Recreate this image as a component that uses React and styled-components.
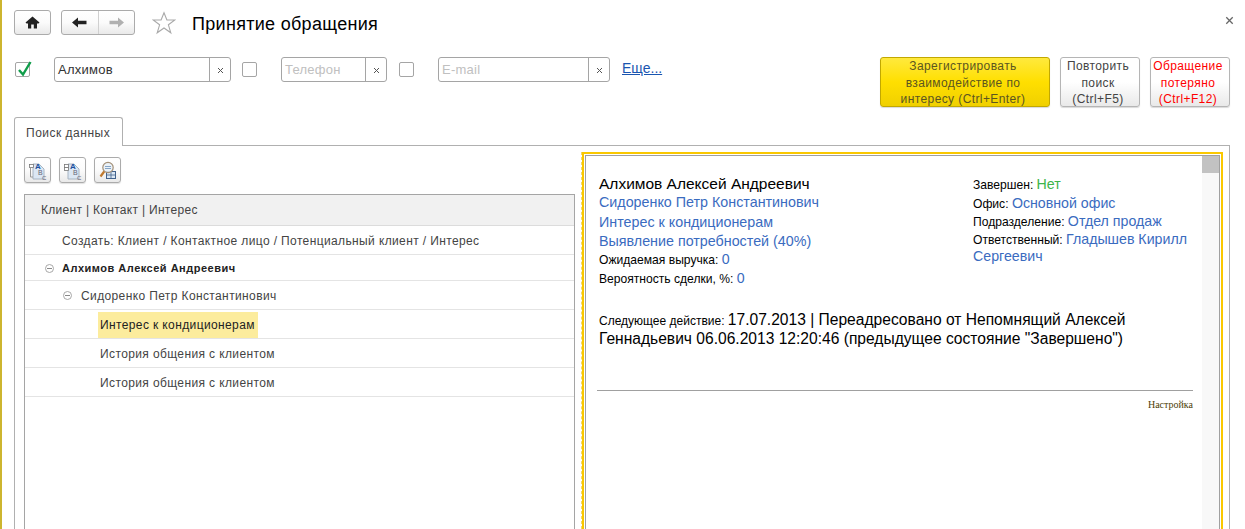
import React from 'react';
import styled, { createGlobalStyle, css } from 'styled-components';

const GlobalStyle = createGlobalStyle`
  html, body {
    margin: 0;
    padding: 0;
    background: #fff;
  }
  * { box-sizing: border-box; }
`;

const Page = styled.div`
  width: 1245px;
  height: 529px;
  overflow: hidden;
  background: #fff;
  border-left: 2px solid #cdb52f;
  padding: 10px 15px 0 12px;
  font-family: "Liberation Sans", Arial, sans-serif;
  font-size: 12px;
  color: #333;
  display: flex;
  flex-direction: column;
`;

// --- top bar
const TopBar = styled.div`
  display: flex;
  align-items: center;
  height: 25px;
`;

const buttonFace = css`
  background: linear-gradient(#fff, #fbfbfb 50%, #e9e9e9);
  border: 1px solid #ababab;
  border-radius: 3px;
`;

const HomeButton = styled.div`
  ${buttonFace}
  width: 37px;
  height: 25px;
  display: flex;
  align-items: center;
  justify-content: center;
`;

const NavGroup = styled.div`
  ${buttonFace}
  width: 74px;
  height: 25px;
  margin-left: 10px;
  display: flex;
`;

const NavCell = styled.div`
  flex: 1;
  display: flex;
  align-items: center;
  justify-content: center;
  & + & { border-left: 1px solid #d0d0d0; }
`;

const StarWrap = styled.div`
  margin-left: 17px;
  width: 24px;
  height: 24px;
`;

const Title = styled.div`
  margin-left: 16px;
  padding-top: 3px;
  font-size: 18px;
  color: #000;
  letter-spacing: 0.3px;
`;

const CloseMark = styled.div`
  margin-left: auto;
  margin-right: -4px;
  width: 9px;
  height: 9px;
  margin-top: -8px;
`;

// --- search row
const SearchRow = styled.div`
  display: flex;
  align-items: flex-start;
  margin-top: 22px;
  height: 50px;
`;

const Check = styled.div`
  width: 15px;
  height: 15px;
  margin-top: 5px;
  margin-left: ${p => p.$left || 0}px;
  border: 1px solid #a5a5a5;
  border-radius: 2px;
  background: #fff;
  position: relative;
`;

const CheckMark = styled.svg`
  position: absolute;
  left: 0;
  top: -4px;
`;

const Field = styled.div`
  width: ${p => p.$width}px;
  height: 25px;
  margin-left: ${p => p.$left}px;
  border: 1px solid #a5a5a5;
  border-radius: 3px;
  display: flex;
  background: #fff;
`;

const FieldText = styled.div`
  flex: 1;
  padding-left: 3px;
  line-height: 23px;
  font-size: 13px;
  letter-spacing: 0.25px;
  color: ${p => (p.$placeholder ? '#c0c0c0' : '#333')};
`;

const FieldClear = styled.div`
  width: 21px;
  border-left: 1px solid #a5a5a5;
  display: flex;
  align-items: center;
  justify-content: center;
  padding-top: 1px;
`;

const MoreLink = styled.a`
  margin-left: 12px;
  line-height: 23px;
  font-size: 14px;
  color: #1a55b0;
  text-decoration: underline;
`;

const Actions = styled.div`
  margin-left: auto;
  display: flex;
  gap: 10px;
`;

const ActionButton = styled.div`
  width: ${p => p.$width}px;
  height: 50px;
  border-radius: 3px;
  text-align: center;
  font-size: 12px;
  line-height: 16.5px;
  letter-spacing: 0.4px;
  padding-right: 4px;
  box-shadow: 0 1px 1px rgba(0, 0, 0, 0.15);
  ${p => p.$primary
    ? css`
        background: linear-gradient(#ffe93d, #ffdf00 50%, #f0d000);
        border: 1px solid #c2a800;
        color: #5b5520;
      `
    : css`
        background: linear-gradient(#fff, #fff 50%, #e9e9e9);
        border: 1px solid #b5b5b5;
        color: ${p.$alert ? '#f00' : '#444'};
      `}
`;

// --- tab
const TabStrip = styled.div`
  display: flex;
  height: 29px;
  margin-top: 10px;
`;

const Tab = styled.div`
  width: 109px;
  border: 1px solid #b0b0b0;
  border-bottom: none;
  border-radius: 3px 3px 0 0;
  padding: 8px 0 0 11px;
  letter-spacing: 0.5px;
  color: #444;
`;

const TabFiller = styled.div`
  flex: 1;
  border-bottom: 1px solid #b0b0b0;
`;

const Panel = styled.div`
  flex: 1;
  min-height: 0;
  display: flex;
  border-left: 1px solid #b0b0b0;
  border-right: 1px solid #b0b0b0;
  padding: 0 6px 0 9px;
  gap: 6px;
`;

// --- left column
const TreeColumn = styled.div`
  width: 551px;
  flex-shrink: 0;
  padding-top: 11px;
  display: flex;
  flex-direction: column;
`;

const Tools = styled.div`
  display: flex;
  gap: 8px;
  height: 26px;
  margin-bottom: 11px;
`;

const ToolButton = styled.div`
  ${buttonFace}
  width: 27px;
  height: 26px;
  display: flex;
  align-items: center;
  justify-content: center;
  box-shadow: 0 1px 1px rgba(0, 0, 0, 0.12);
`;

const Tree = styled.div`
  flex: 1;
  border: 1px solid #a5a5a5;
  border-bottom: none;
`;

const TreeHeader = styled.div`
  height: 31px;
  background: #f1f1f1;
  border-bottom: 1px solid #dcdcdc;
  padding-left: 16px;
  line-height: 31px;
  letter-spacing: 0.3px;
  color: #444;
`;

const TreeRow = styled.div`
  height: ${p => p.$height || 29}px;
  border-bottom: 1px solid #e4e4e4;
  display: flex;
  align-items: center;
  padding: 1px 0 0 ${p => p.$indent}px;
  letter-spacing: ${p => (p.$bold ? 0.5 : 0.38)}px;
  font-weight: ${p => (p.$bold ? 700 : 400)};
  font-size: ${p => (p.$bold ? 11 : 12)}px;
  color: ${p => (p.$bold ? '#222' : '#444')};
`;

const Toggle = styled.span`
  width: 9px;
  height: 9px;
  margin-right: ${p => p.$gap}px;
  border: 1px solid #a8a8a8;
  border-radius: 50%;
  display: flex;
  align-items: center;
  justify-content: center;
  &::after {
    content: '';
    width: 5px;
    height: 1px;
    background: #888;
  }
`;

const Highlight = styled.span`
  background: #fcec9d;
  color: #222;
  height: 26px;
  line-height: 26px;
  padding: 0 3px 0 2px;
  margin-left: -2px;
`;

// --- right column
const DetailFrame = styled.div`
  flex: 1;
  min-width: 0;
  margin-top: 6px;
  border-left: 1px dashed #f2d968;
  display: flex;
`;

const DetailYellow = styled.div`
  flex: 1;
  min-width: 0;
  border: 2px solid #fac800;
  border-bottom: none;
  padding: 1px 1px 0;
  display: flex;
`;

const DetailBox = styled.div`
  flex: 1;
  min-width: 0;
  display: flex;
  border: 1px solid #a0a0a0;
  border-bottom: none;
`;

const DetailBody = styled.div`
  flex: 1;
  min-width: 0;
  padding: 18px 10px 0 13px;
  color: #000;
`;

const DetailColumns = styled.div`
  display: flex;
  height: 137.5px;
`;

const DetailMain = styled.div`
  width: 374px;
`;

const DetailSide = styled.div`
  flex: 1;
  padding-top: 1.5px;
`;

const Line = styled.div`
  font-size: ${p => p.$size || 12.1}px;
  line-height: ${p => p.$line || 19.3}px;
  color: ${p => p.$color || '#000'};
`;

const Value = styled.span`
  font-size: 14.2px;
  line-height: 1;
  color: ${p => p.$color || '#3a6bc0'};
`;

const NextAction = styled.div`
  font-size: 12px;
  line-height: 19px;
  width: 560px;
`;

const NextText = styled.span`
  font-size: 15.6px;
  line-height: 1;
`;

const Rule = styled.div`
  height: 1px;
  background: #a0a0a0;
  margin: 40px 0 0 -2px;
  width: 596px;
`;

const Settings = styled.div`
  width: 594px;
  margin-top: 8px;
  text-align: right;
  font-family: "Liberation Serif", "Times New Roman", serif;
  font-size: 10px;
  color: #4c3e05;
`;

const Scrollbar = styled.div`
  width: 17px;
  flex-shrink: 0;
  background: #f8f8f8;
`;

const ScrollThumb = styled.div`
  height: 17px;
  background: #c2c2c2;
`;

const ClearIcon = ({ size = 7, color = '#555' }) => (
  <svg width={size} height={size} viewBox="0 0 7 7">
    <path d="M1 1l5 5M6 1L1 6" stroke={color} strokeWidth="1" fill="none" />
  </svg>
);

const HomeIcon = () => (
  <svg width="15" height="13" viewBox="0 0 15 13">
    <path d="M7.5 0.5L0.5 6.5L1.5 7.5H3V12.5H6.2V8.5H8.8V12.5H12V7.5H13.5L14.5 6.5Z" fill="#222" />
  </svg>
);

const ArrowIcon = ({ left, color }) => (
  <svg width="15" height="11" viewBox="0 0 15 11">
    <path
      d={left ? 'M0 5.5L6 0.5V3.8H14.5V7.2H6V10.5Z' : 'M15 5.5L9 0.5V3.8H0.5V7.2H9V10.5Z'}
      fill={color}
    />
  </svg>
);

const StarIcon = () => (
  <svg width="24" height="24" viewBox="0 0 24 24">
    <path
      d="M12 1.8L14.9 9H22.8L16.4 13.8L18.8 21.8L12 17L5.2 21.8L7.6 13.8L1.2 9H9.1Z"
      fill="#fff"
      stroke="#a9a9a9"
      strokeWidth="1.1"
    />
  </svg>
);

const PageLetters = ({ tree }) => (
  <svg width="20" height="21" viewBox="0 0 20 21">
    <path d="M5 4H11L16 9V19H5Z" fill="#dbe7f4" stroke="#a7b4c2" strokeWidth="1" />
    <rect x="1.5" y="4.5" width="4" height="3" fill="#fff" stroke="#777" strokeWidth="0.8" />
    {tree ? (
      <rect x="1.5" y="7.5" width="4" height="3" fill="#fff" stroke="#777" strokeWidth="0.8" />
    ) : (
      <path d="M2.5 8V17H5" fill="none" stroke="#999" strokeWidth="1" />
    )}
    <text x="7" y="9" fontSize="8" fontWeight="700" fill="#1c4f9c" fontFamily="Liberation Sans">A</text>
    <text x="10" y="15" fontSize="7" fill="#667" fontFamily="Liberation Sans">B</text>
    <text x="14" y="20" fontSize="6" fill="#667" fontFamily="Liberation Sans">C</text>
  </svg>
);

const SearchTableIcon = () => (
  <svg width="20" height="20" viewBox="0 0 20 20">
    <rect x="8.5" y="11.5" width="9" height="7" fill="#dbe7f4" stroke="#42628c" strokeWidth="1" />
    <path d="M13 12V18M9 15H17" stroke="#42628c" strokeWidth="0.8" />
    <circle cx="10" cy="7.5" r="5.2" fill="#e8f0f7" fillOpacity="0.85" stroke="#a39078" strokeWidth="1.2" />
    <path d="M6.2 11.5L2.5 16.5" stroke="#c07a30" strokeWidth="2.2" />
    <path d="M7 6.5H13M7 8.5H13" stroke="#7a9cc0" strokeWidth="0.9" />
  </svg>
);

const treeRows = [
  { id: 'create', indent: 37, label: 'Создать: Клиент / Контактное лицо / Потенциальный клиент / Интерес' },
  { id: 'client', indent: 20, height: 26, bold: true, toggle: 8, label: 'Алхимов Алексей Андреевич' },
  { id: 'contact', indent: 38, toggle: 9, label: 'Сидоренко Петр Константинович' },
  { id: 'interest', indent: 75, selected: true, label: 'Интерес к кондиционерам' },
  { id: 'history1', indent: 75, label: 'История общения с клиентом' },
  { id: 'history2', indent: 75, label: 'История общения с клиентом' },
];

export default function App() {
  return (
    <>
      <GlobalStyle />
      <Page>
        <TopBar>
          <HomeButton><HomeIcon /></HomeButton>
          <NavGroup>
            <NavCell><ArrowIcon left color="#222" /></NavCell>
            <NavCell><ArrowIcon color="#b0b0b0" /></NavCell>
          </NavGroup>
          <StarWrap><StarIcon /></StarWrap>
          <Title>Принятие обращения</Title>
          <CloseMark><ClearIcon size={9} color="#666" /></CloseMark>
        </TopBar>

        <SearchRow>
          <Check $left={1}>
            <CheckMark width="18" height="19" viewBox="0 0 18 19">
              <path d="M3 11L7 15.5L14.5 3" fill="none" stroke="#0f9d4a" strokeWidth="2.4" />
            </CheckMark>
          </Check>
          <Field $width={177} $left={24}>
            <FieldText>Алхимов</FieldText>
            <FieldClear><ClearIcon /></FieldClear>
          </Field>
          <Check $left={11} />
          <Field $width={106} $left={24}>
            <FieldText $placeholder>Телефон</FieldText>
            <FieldClear><ClearIcon /></FieldClear>
          </Field>
          <Check $left={12} />
          <Field $width={172} $left={24}>
            <FieldText $placeholder>E-mail</FieldText>
            <FieldClear><ClearIcon /></FieldClear>
          </Field>
          <MoreLink>Еще...</MoreLink>
          <Actions>
            <ActionButton $primary $width={170}>Зарегистрировать<br />взаимодействие по<br />интересу (Ctrl+Enter)</ActionButton>
            <ActionButton $width={80}>Повторить<br />поиск<br />(Ctrl+F5)</ActionButton>
            <ActionButton $alert $width={80}>Обращение<br />потеряно<br />(Ctrl+F12)</ActionButton>
          </Actions>
        </SearchRow>

        <TabStrip>
          <Tab>Поиск данных</Tab>
          <TabFiller />
        </TabStrip>

        <Panel>
          <TreeColumn>
            <Tools>
              <ToolButton><PageLetters /></ToolButton>
              <ToolButton><PageLetters tree /></ToolButton>
              <ToolButton><SearchTableIcon /></ToolButton>
            </Tools>
            <Tree>
              <TreeHeader>Клиент | Контакт | Интерес</TreeHeader>
              {treeRows.map(row => (
                <TreeRow key={row.id} $indent={row.indent} $height={row.height} $bold={row.bold}>
                  {row.toggle && <Toggle $gap={row.toggle} />}
                  {row.selected ? <Highlight>{row.label}</Highlight> : row.label}
                </TreeRow>
              ))}
            </Tree>
          </TreeColumn>

          <DetailFrame>
            <DetailYellow>
              <DetailBox>
                <DetailBody>
                  <DetailColumns>
                    <DetailMain>
                      <Line $size={15.5}>Алхимов Алексей Андреевич</Line>
                      <Line $size={14.3} $color="#3a6bc0">Сидоренко Петр Константинович</Line>
                      <Line $size={14.3} $color="#3a6bc0">Интерес к кондиционерам</Line>
                      <Line $size={14.3} $color="#3a6bc0">Выявление потребностей (40%)</Line>
                      <Line>Ожидаемая выручка: <Value>0</Value></Line>
                      <Line>Вероятность сделки, %: <Value>0</Value></Line>
                    </DetailMain>
                    <DetailSide>
                      <Line>Завершен: <Value $color="#3db54a">Нет</Value></Line>
                      <Line>Офис: <Value>Основной офис</Value></Line>
                      <Line $line={17.5}>Подразделение: <Value>Отдел продаж</Value></Line>
                      <Line $line={17.5}>Ответственный: <Value>Гладышев Кирилл Сергеевич</Value></Line>
                    </DetailSide>
                  </DetailColumns>
                  <NextAction>
                    Следующее действие: <NextText>17.07.2013 | Переадресовано от Непомнящий Алексей Геннадьевич 06.06.2013 12:20:46 (предыдущее состояние "Завершено")</NextText>
                  </NextAction>
                  <Rule />
                  <Settings>Настройка</Settings>
                </DetailBody>
                <Scrollbar><ScrollThumb /></Scrollbar>
              </DetailBox>
            </DetailYellow>
          </DetailFrame>
        </Panel>
      </Page>
    </>
  );
}
